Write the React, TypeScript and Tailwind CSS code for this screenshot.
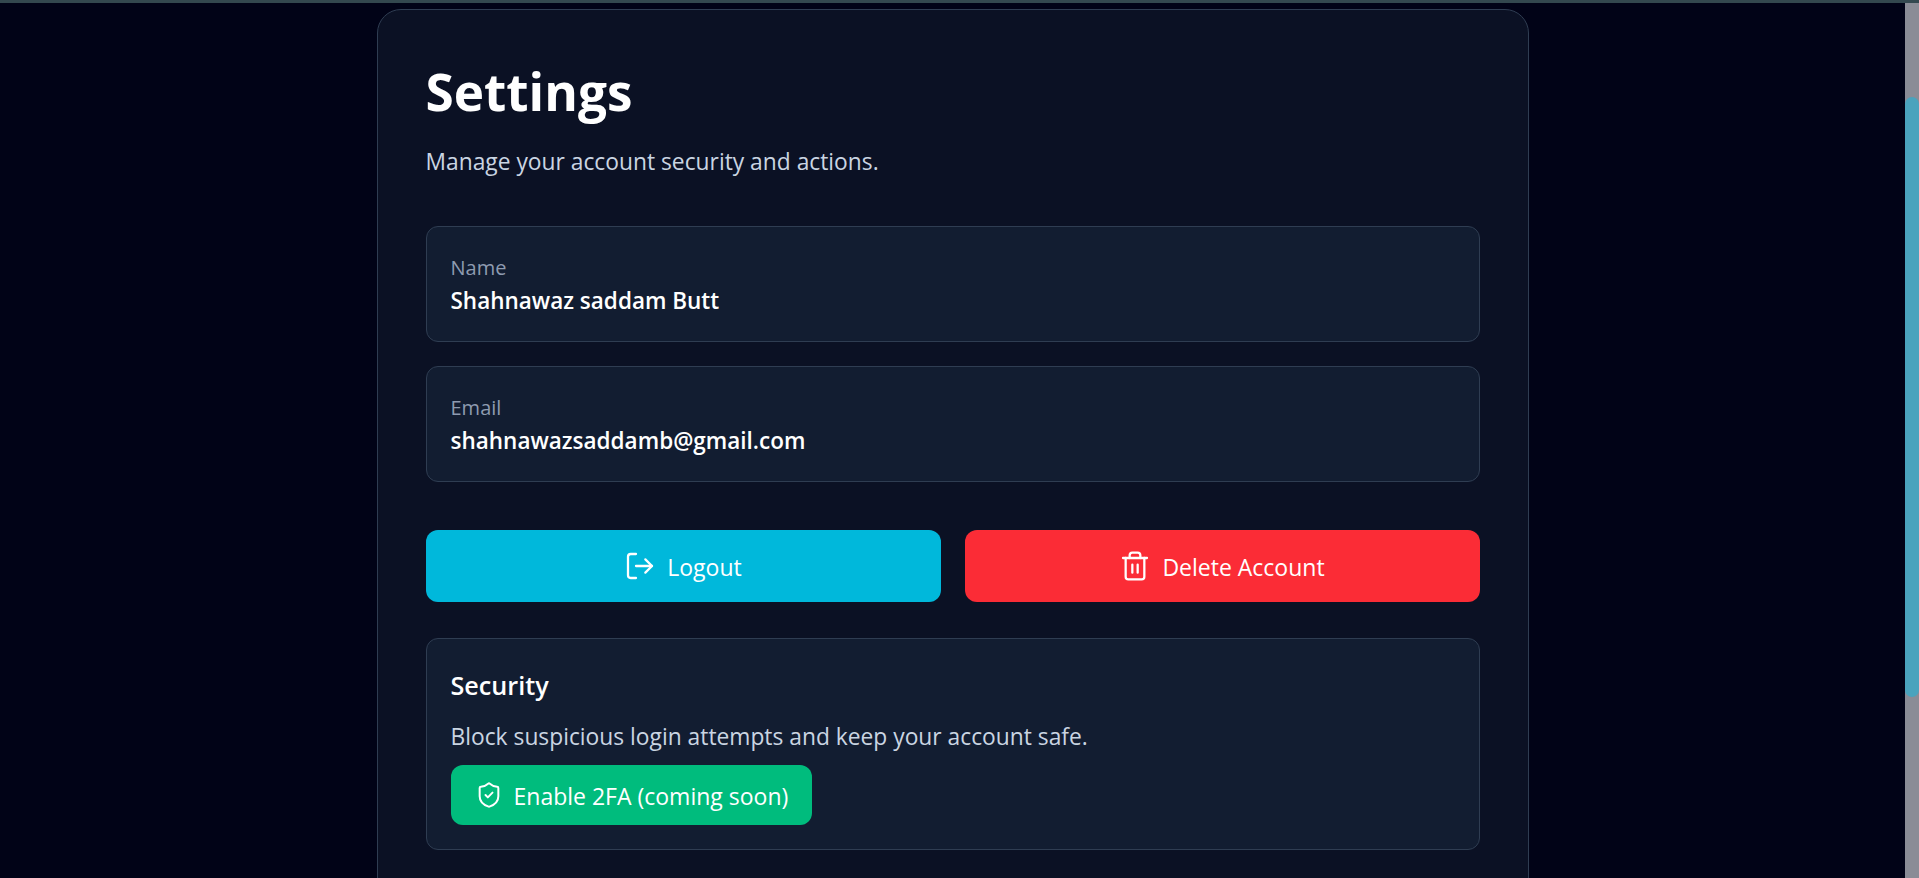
import { LogOut, ShieldCheck, Trash2 } from 'lucide-react';

function InfoBox({ label, value }: { label: string; value: string }) {
  return (
    <div className="h-[116px] rounded-xl border border-[#2f3d52] bg-[#121d31] px-6 pt-[25px]">
      <p className="text-xl leading-8 text-[#8e9bb0]">{label}</p>
      <p className="mt-px text-[22.5px] font-semibold leading-8 text-white">{value}</p>
    </div>
  );
}

export default function App() {
  return (
    <div className="flex h-screen flex-col overflow-hidden bg-[#010317] font-['Open_Sans','Noto_Sans',sans-serif]">
      <div className="h-[3px] shrink-0 bg-[#33484f]" />
      <div className="flex min-h-0 flex-1">
        <main className="flex-1 overflow-hidden px-4 pt-1.5">
          <div className="mx-auto h-[1000px] w-[1152px] rounded-3xl border border-[#2f3d52] bg-[#0b1124] px-12 pt-[51px]">
            <h1 className="text-[51.3px] font-bold leading-[60px] text-white">Settings</h1>
            <p className="mt-[25px] text-[22.8px] leading-8 text-slate-300">Manage your account security and actions.</p>

            <div className="mt-12 flex flex-col gap-6">
              <InfoBox label="Name" value="Shahnawaz saddam Butt" />
              <InfoBox label="Email" value="shahnawazsaddamb@gmail.com" />
            </div>

            <div className="mt-12 grid grid-cols-2 gap-6">
              <button className="flex h-[72px] items-center justify-center gap-[11px] rounded-xl bg-cyan-500 text-[23px] text-white">
                <LogOut size={32} strokeWidth={1.7} />
                <span className="pt-0.5">Logout</span>
              </button>
              <button className="flex h-[72px] items-center justify-center gap-[11px] rounded-xl bg-red-500 text-[23px] text-white">
                <Trash2 size={32} strokeWidth={1.7} />
                <span className="pt-0.5">Delete Account</span>
              </button>
            </div>

            <section className="mt-9 h-[212px] rounded-xl border border-[#2f3d52] bg-[#121d31] px-6 pt-[30px]">
              <h2 className="text-[25.2px] font-semibold leading-8 text-white">Security</h2>
              <p className="mt-5 text-[22.8px] leading-8 text-slate-300">
                Block suspicious login attempts and keep your account safe.
              </p>
              <button className="mt-3 flex h-[60px] items-center gap-[11px] rounded-xl bg-emerald-500 px-6 text-[23px] text-white">
                <ShieldCheck size={28} strokeWidth={1.7} />
                <span className="pt-0.5">Enable 2FA (coming soon)</span>
              </button>
            </section>
          </div>
        </main>
        <div className="w-3.5 shrink-0 bg-[#8a8c96] pt-[94px]">
          <div className="h-[600px] rounded-lg bg-[#4aa3bd]" />
        </div>
      </div>
    </div>
  );
}
